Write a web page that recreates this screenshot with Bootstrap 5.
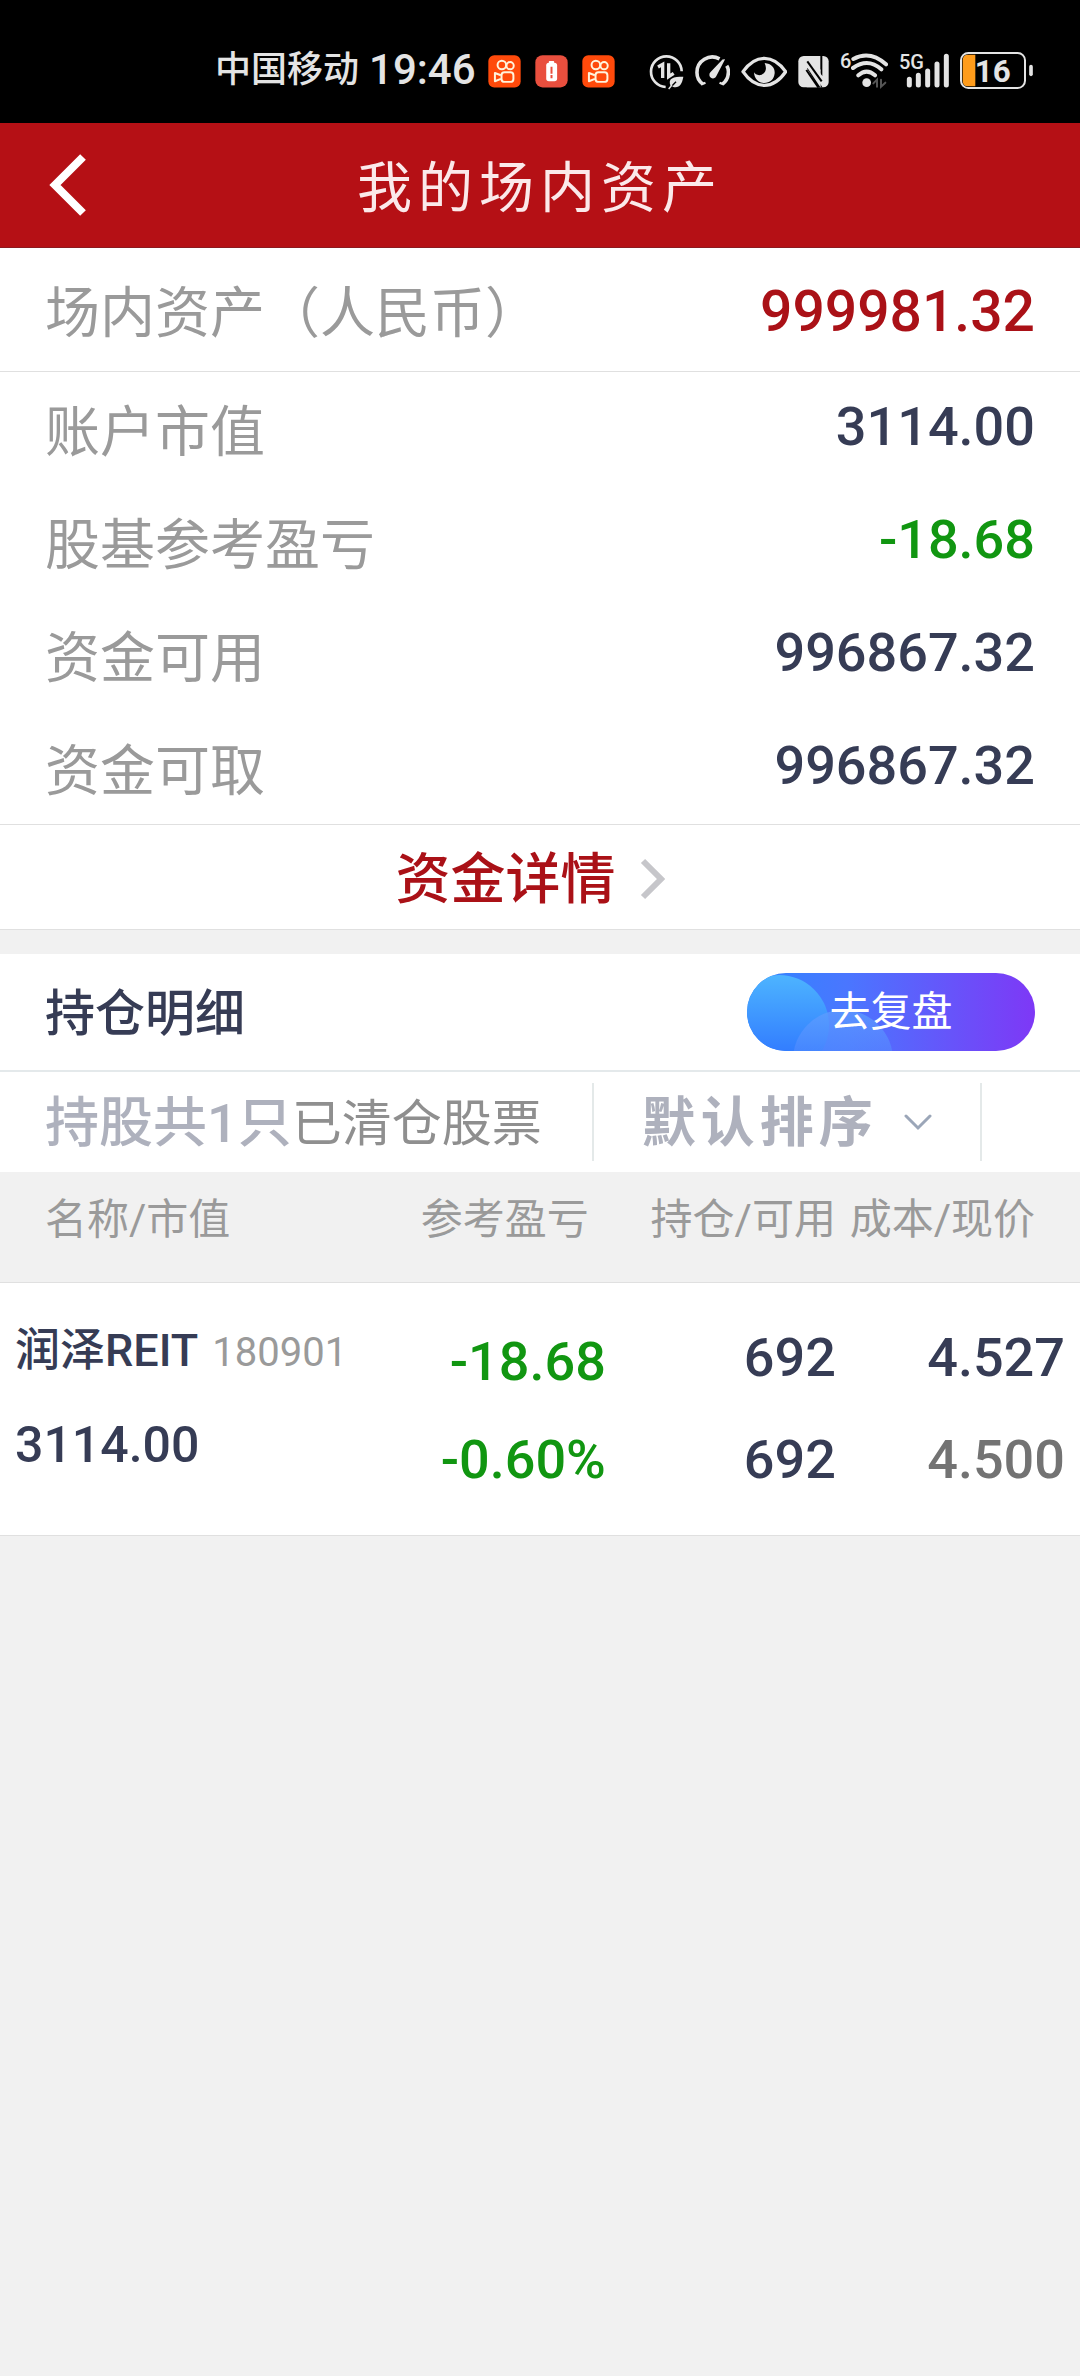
<!DOCTYPE html>
<html lang="zh-CN">
<head>
<meta charset="utf-8">
<meta name="viewport" content="width=device-width, initial-scale=1">
<title>我的场内资产</title>
<link href="https://cdn.jsdelivr.net/npm/bootstrap@5.3.0/dist/css/bootstrap.min.css" rel="stylesheet">
<style>
  :root { --ink: #363c55; --muted: #9a9a9a; --pale: #aeb1bd; --brand: #b51015; --deep: #aa1117; --down: #119611; --rule: #e0e0e0; }
  body { font-family: Roboto, "Noto Sans CJK SC", sans-serif; background: #f1f1f1; color: var(--ink); }
  button, select { font-family: inherit; }
  .status-bar { height: 123px; padding: 16px 47px 0 215px; color: #e4e4e4; background: #000; }
  .status-bar svg { display: block; height: 40px; flex: none; }
  .icon-set { gap: 14px; }
  .icon-set-end { gap: 11px; }
  .carrier { font-size: 36px; font-weight: 500; line-height: 40px; }
  .clock { font-size: 42px; font-weight: 500; line-height: 40px; padding-left: 10px; }
  .app-head { height: 125px; background: var(--brand); border-bottom: 1px solid #8c1a20; color: #fbe9ea; }
  .app-head .side { width: 136px; flex: none; }
  .app-head a { padding-left: 46px; }
  .app-title { font-size: 55px; letter-spacing: 6px; font-weight: 400; line-height: 64px; padding-top: 6px; }
  .gutter { padding-left: 45px; padding-right: 45px; }
  .total-line { height: 124px; border-bottom: 1px solid var(--rule); }
  .label-text { font-size: 55px; line-height: 64px; padding-top: 6px; color: var(--muted); }
  .total-num { font-size: 57px; line-height: 64px; padding-top: 4px; color: var(--deep); }
  .sum-list { border-bottom: 1px solid var(--rule); }
  .sum-line { height: 113px; }
  .sum-num { font-size: 54px; line-height: 64px; padding-bottom: 4px; }
  .num { font-weight: 500; }
  .c-down { color: var(--down); }
  .detail-link { height: 105px; padding: 4px 20px 0 0; gap: 24px; font-size: 55px; line-height: 64px; font-weight: 500; color: var(--deep); border-bottom: 1px solid var(--rule); }
  .holdings { margin-top: 24px; }
  .holdings-head { height: 118px; border-bottom: 2px solid #e4e9eb; }
  .holdings-title { font-size: 50px; line-height: 64px; padding-top: 4px; font-weight: 500; }
  .review-btn { position: relative; width: 288px; height: 78px; border: 0; border-radius: 39px; overflow: hidden; padding: 0; color: #fff; font-size: 41px; line-height: 78px; }
  .review-btn svg { position: absolute; inset: 0; width: 100%; height: 100%; }
  .review-btn span { position: relative; }
  .filter-bar { height: 100px; }
  .filter-bar button { border: 0; background: none; padding: 4px 0 0; line-height: 64px; }
  .tab-pair { padding: 0 50px 0 45px; }
  .tab-held { font-size: 54px; font-weight: 500; color: var(--pale); }
  .tab-closed { font-size: 50px; color: #8f8f8f; }
  .split { width: 2px; height: 78px; background: #e4e9e9; }
  .sort-box { padding: 0 48px; gap: 26px; }
  .sort-box select { appearance: none; border: 0; background: none; padding: 4px 0 0; font-size: 54px; font-weight: 700; letter-spacing: 5px; line-height: 64px; color: var(--pale); }
  .pos-table { table-layout: fixed; width: 100%; margin: 0; }
  .pos-table th { height: 110px; padding: 0 0 14px; font-size: 42px; font-weight: 400; line-height: 60px; color: var(--muted); vertical-align: middle; text-align: right; white-space: nowrap; }
  .pos-table tbody { background: #fff; border-top: 1px solid var(--rule); border-bottom: 1px solid var(--rule); }
  .pos-table td { height: 253px; padding: 0; vertical-align: middle; text-align: right; font-size: 54px; line-height: 102px; white-space: nowrap; }
  .pos-table th.th-name { text-align: left; padding-left: 45px; }
  .pos-table th.th-gain { padding-right: 17px; }
  .pos-table th.th-cost { padding-right: 45px; }
  .pos-table td.td-name { text-align: left; padding: 0 0 24px 15px; font-size: 50px; line-height: 92px; }
  .pos-table td.td-gain { padding-top: 4px; line-height: 98px; }
  .pos-table td.td-cost { padding-right: 15px; }
  .stock-name { font-size: 45px; font-weight: 500; }
  .stock-code { font-size: 40px; color: var(--muted); margin-left: 14px; }
  .c-now { color: #737373; }
</style>
<script src="https://cdn.jsdelivr.net/npm/bootstrap@5.3.0/dist/js/bootstrap.bundle.min.js"></script>
</head>
<body>
<svg class="d-none">
  <symbol id="kuaishou" viewBox="0 0 100 120">
    <rect x="1" y="15" width="98" height="98" rx="18" fill="#ff4a0b"/>
    <g fill="none" stroke="#fff3dc" stroke-width="6">
      <circle cx="42" cy="45" r="13"/><circle cx="67" cy="47" r="11"/>
      <rect x="41" y="67" width="36" height="29" rx="9"/>
      <path d="M39 76L21 69v25l18-7" stroke-linejoin="round"/>
    </g>
  </symbol>
</svg>

<div class="status-bar d-flex align-items-center">
  <span class="carrier">中国移动</span>
  <span class="clock">19:46</span>
  <div class="icon-set d-flex ms-2 ps-1">
    <svg width="33"><use href="#kuaishou"/></svg>
    <svg width="33" viewBox="0 0 100 120"><rect x="1" y="15" width="98" height="98" rx="22" fill="#e94f3e"/><rect x="42" y="33" width="16" height="8" rx="2" fill="#fff"/><rect x="34" y="38" width="33" height="56" rx="8" fill="#fff"/><path d="M50 50v21M50 75v10" stroke="#e94f3e" stroke-width="6"/></svg>
    <svg width="33"><use href="#kuaishou"/></svg>
  </div>
  <div class="icon-set-end d-flex ms-auto">
    <svg width="35" viewBox="53 54 105 120" fill="none" stroke="#e4e4e4" stroke-width="8">
      <path d="M103 165A46 46 0 1 1 151 118"/>
      <path d="M80 105L94 97V138M112 94V134L127 124" stroke-width="10"/>
      <path d="M118 162C108 138 126 134 156 134C152 158 142 170 124 164Z" fill="#e4e4e4" stroke="none"/><path d="M113 171L134 149" stroke="#000" stroke-width="4"/><path d="M112 171L122 159" stroke-width="4"/>
    </svg>
    <svg width="35" viewBox="191 54 107 120" fill="none" stroke="#e4e4e4" stroke-width="11">
      <path d="M215 157Q197 145 197 122A47 47 0 0 1 266 80M288 101Q294 110 293 122Q292 145 275 157" />
      <path d="M208 150l5 7 10-4M281 150l-5 7-10-4" stroke-width="7"/>
      <path d="M283 81L256 133A11 11 0 1 1 238 121L275 82Z" fill="#e4e4e4" stroke="none"/>
    </svg>
    <svg width="46" viewBox="332 54 138 120">
      <path d="M338 119Q366 79 402 79Q438 79 466 119Q438 160 402 160Q366 160 338 119Z" fill="none" stroke="#e4e4e4" stroke-width="10" stroke-linejoin="round"/>
      <path d="M403 93C424 95 434 108 433 124C431 144 418 153 402 153C385 153 372 142 371 121C374 127 384 132 394 128C409 121 409 107 403 93Z" fill="#e4e4e4"/>
    </svg>
    <svg width="31" viewBox="507 54 93 120">
      <rect x="508" y="72" width="91" height="94" rx="16" fill="#e4e4e4"/>
      <path d="M527 72h8L580 132V72h-6V116L540 72H527V166H535V112L568 166H580L535 90V166h-8Z" fill="#000" fill-rule="evenodd" stroke="none"/>
      <path d="M534 72H545L575 114V166H574L534 106Z" fill="#e4e4e4"/>
      <path d="M535 88L578 148" stroke="#000" stroke-width="6"/>
      <path d="M533 118V166H566Z" fill="#e4e4e4"/>
      <path d="M532 114L568 166" stroke="#000" stroke-width="6"/>
    </svg>
    <svg width="48" viewBox="628 54 144 120" fill="none" stroke="#e4e4e4" stroke-width="12" stroke-linecap="round">
      <text x="628" y="109" font-size="60" font-weight="500" fill="#e4e4e4" stroke="none">6</text>
      <path d="M668 81Q718 54 766 97M667 108Q712 76 752 112M683 130Q708 108 733 130"/>
      <circle cx="708" cy="152" r="13" fill="#e4e4e4" stroke="none"/>
      <path d="M728 154L739 143V164M751 143V164L764 152" stroke="#555" stroke-width="6"/>
    </svg>
    <svg width="50" viewBox="803 54 150 120">
      <text x="803" y="111" font-size="60" font-weight="500" fill="#e4e4e4">5G</text>
      <path d="M834 142V159M861 130V159M889 117V159M917 96V159M945 73V159" stroke="#e4e4e4" stroke-width="15" stroke-linecap="round"/>
    </svg>
    <svg width="73" viewBox="990 54 219 120">
      <path d="M1036 68V163H1014Q998 163 998 147V85Q998 68 1014 68Z" fill="#ff9c1b"/>
      <rect x="993" y="63" width="192" height="105" rx="22" fill="none" stroke="#e4e4e4" stroke-width="6"/>
      <path d="M1203 104V127" stroke="#e4e4e4" stroke-width="11" stroke-linecap="round"/>
      <text x="1034" y="151" font-size="94" font-weight="700" fill="#e4e4e4">16</text>
    </svg>
  </div>
</div>

<header class="app-head d-flex align-items-center">
  <a class="side" href="#" aria-label="返回"><svg class="d-block" width="44" height="64" viewBox="0 0 44 64"><path d="M37 4L9 32L37 60" fill="none" stroke="#fff" stroke-width="8"/></svg></a>
  <h1 class="app-title flex-fill text-center m-0">我的场内资产</h1>
  <span class="side"></span>
</header>

<main>
  <section class="bg-white">
    <div class="total-line gutter d-flex justify-content-between align-items-center">
      <span class="label-text">场内资产（人民币）</span><span class="total-num num">999981.32</span>
    </div>
    <div class="sum-list">
      <div class="sum-line gutter d-flex justify-content-between align-items-center"><span class="label-text">账户市值</span><span class="sum-num num">3114.00</span></div>
      <div class="sum-line gutter d-flex justify-content-between align-items-center"><span class="label-text">股基参考盈亏</span><span class="sum-num num c-down">-18.68</span></div>
      <div class="sum-line gutter d-flex justify-content-between align-items-center"><span class="label-text">资金可用</span><span class="sum-num num">996867.32</span></div>
      <div class="sum-line gutter d-flex justify-content-between align-items-center"><span class="label-text">资金可取</span><span class="sum-num num">996867.32</span></div>
    </div>
    <a class="detail-link d-flex justify-content-center align-items-center text-decoration-none" href="#">资金详情
      <svg width="25" height="42" viewBox="0 0 25 42"><path d="M3 3L21 21L3 39" fill="none" stroke="#c6c6ca" stroke-width="6"/></svg>
    </a>
  </section>

  <section class="holdings">
    <div class="holdings-head gutter bg-white d-flex justify-content-between align-items-center">
      <h2 class="holdings-title m-0">持仓明细</h2>
      <button class="review-btn" type="button">
        <svg viewBox="0 0 288 78" preserveAspectRatio="none" aria-hidden="true">
          <defs>
            <linearGradient id="pill"><stop offset="0" stop-color="#2e86ff"/><stop offset=".35" stop-color="#4a76ff"/><stop offset="1" stop-color="#7e38f6"/></linearGradient>
            <linearGradient id="bubble" x1="0" y1="0" x2="0" y2="1"><stop offset="0" stop-color="#4db4ff"/><stop offset="1" stop-color="#2a6cff"/></linearGradient>
            <linearGradient id="bubble2" x1="0" y1="0" x2="0" y2="1"><stop offset="0" stop-color="#5f9dff"/><stop offset="1" stop-color="#4a78ff" stop-opacity=".3"/></linearGradient>
          </defs>
          <rect width="288" height="78" fill="url(#pill)"/>
          <circle cx="32" cy="52" r="50" fill="url(#bubble)"/>
          <circle cx="96" cy="87" r="50" fill="url(#bubble2)" opacity=".75"/>
        </svg>
        <span>去复盘</span>
      </button>
    </div>
    <div class="filter-bar bg-white d-flex align-items-center">
      <div class="tab-pair d-flex align-items-center">
        <button class="tab-held" type="button">持股共1只</button>
        <button class="tab-closed" type="button">已清仓股票</button>
      </div>
      <span class="split"></span>
      <div class="sort-box d-flex align-items-center">
        <select aria-label="排序方式"><option>默认排序</option></select>
        <svg width="28" height="17" viewBox="0 0 28 17"><path d="M2 2L14 14L26 2" fill="none" stroke="#9ba6b8" stroke-width="3" stroke-linecap="round"/></svg>
      </div>
      <span class="split"></span>
    </div>
    <table class="pos-table">
      <colgroup><col style="width:34.8%"><col style="width:21.3%"><col style="width:21.3%"><col></colgroup>
      <thead><tr><th class="th-name" scope="col">名称/市值</th><th class="th-gain" scope="col">参考盈亏</th><th scope="col">持仓/可用</th><th class="th-cost" scope="col">成本/现价</th></tr></thead>
      <tbody><tr>
        <td class="td-name"><div><span class="stock-name">润泽REIT</span><span class="stock-code">180901</span></div><div class="num">3114.00</div></td>
        <td class="td-gain num c-down"><div>-18.68</div><div>-0.60%</div></td>
        <td class="num"><div>692</div><div>692</div></td>
        <td class="num td-cost"><div>4.527</div><div class="c-now">4.500</div></td>
      </tr></tbody>
    </table>
  </section>
</main>
</body>
</html>
